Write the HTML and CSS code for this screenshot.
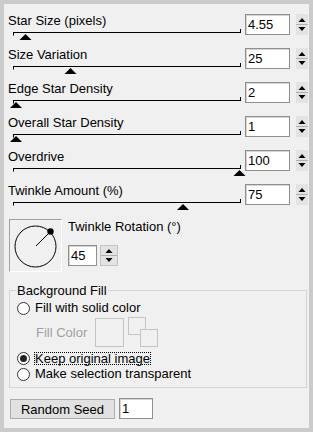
FILE: index.html
```html
<!DOCTYPE html>
<html>
<head>
<meta charset="utf-8">
<link rel="stylesheet" href="styles.css">
</head>
<body>
<div class="panel">
  <div class="row">
    <div class="slider">
      <div class="label">Star Size (pixels)</div>
      <svg class="track" width="228" height="12" viewBox="0 0 228 12"><path d="M0 4.5H227M0.5 4V7.5M227.5 1V5" stroke="#000" fill="none"/><polygon points="6.5,12 18.5,12 12.5,6" fill="#000"/></svg>
    </div>
    <input class="num" value="4.55">
    <svg class="spin" width="12" height="21" viewBox="0 0 12 21"><rect width="12" height="21" fill="#e3e3e3"/><path d="M0 10.5H12" stroke="#b0b0b0"/><polygon points="2.5,8 9.5,8 6,4" fill="#000"/><polygon points="2.5,13 9.5,13 6,17" fill="#000"/></svg>
  </div>
  <div class="row">
    <div class="slider">
      <div class="label">Size Variation</div>
      <svg class="track" width="228" height="12" viewBox="0 0 228 12"><path d="M0 4.5H227M0.5 4V7.5M227.5 1V5" stroke="#000" fill="none"/><polygon points="51.5,12 63.5,12 57.5,6" fill="#000"/></svg>
    </div>
    <input class="num" value="25">
    <svg class="spin" width="12" height="21" viewBox="0 0 12 21"><rect width="12" height="21" fill="#e3e3e3"/><path d="M0 10.5H12" stroke="#b0b0b0"/><polygon points="2.5,8 9.5,8 6,4" fill="#000"/><polygon points="2.5,13 9.5,13 6,17" fill="#000"/></svg>
  </div>
  <div class="row">
    <div class="slider">
      <div class="label">Edge Star Density</div>
      <svg class="track" width="228" height="12" viewBox="0 0 228 12"><path d="M0 4.5H227M0.5 4V7.5M227.5 1V5" stroke="#000" fill="none"/><polygon points="-3,12 9,12 3,6" fill="#000"/></svg>
    </div>
    <input class="num" value="2">
    <svg class="spin" width="12" height="21" viewBox="0 0 12 21"><rect width="12" height="21" fill="#e3e3e3"/><path d="M0 10.5H12" stroke="#b0b0b0"/><polygon points="2.5,8 9.5,8 6,4" fill="#000"/><polygon points="2.5,13 9.5,13 6,17" fill="#000"/></svg>
  </div>
  <div class="row">
    <div class="slider">
      <div class="label">Overall Star Density</div>
      <svg class="track" width="228" height="12" viewBox="0 0 228 12"><path d="M0 4.5H227M0.5 4V7.5M227.5 1V5" stroke="#000" fill="none"/><polygon points="-3,12 9,12 3,6" fill="#000"/></svg>
    </div>
    <input class="num" value="1">
    <svg class="spin" width="12" height="21" viewBox="0 0 12 21"><rect width="12" height="21" fill="#e3e3e3"/><path d="M0 10.5H12" stroke="#b0b0b0"/><polygon points="2.5,8 9.5,8 6,4" fill="#000"/><polygon points="2.5,13 9.5,13 6,17" fill="#000"/></svg>
  </div>
  <div class="row">
    <div class="slider">
      <div class="label">Overdrive</div>
      <svg class="track" width="234" height="12" viewBox="0 0 234 12"><path d="M0 4.5H227M0.5 4V7.5M227.5 1V5" stroke="#000" fill="none"/><polygon points="220.5,12 232.5,12 226.5,6" fill="#000"/></svg>
    </div>
    <input class="num" value="100">
    <svg class="spin" width="12" height="21" viewBox="0 0 12 21"><rect width="12" height="21" fill="#e3e3e3"/><path d="M0 10.5H12" stroke="#b0b0b0"/><polygon points="2.5,8 9.5,8 6,4" fill="#000"/><polygon points="2.5,13 9.5,13 6,17" fill="#000"/></svg>
  </div>
  <div class="row">
    <div class="slider">
      <div class="label">Twinkle Amount (%)</div>
      <svg class="track" width="228" height="12" viewBox="0 0 228 12"><path d="M0 4.5H227M0.5 4V7.5M227.5 1V5" stroke="#000" fill="none"/><polygon points="164,12 176,12 170,6" fill="#000"/></svg>
    </div>
    <input class="num" value="75">
    <svg class="spin" width="12" height="21" viewBox="0 0 12 21"><rect width="12" height="21" fill="#e3e3e3"/><path d="M0 10.5H12" stroke="#b0b0b0"/><polygon points="2.5,8 9.5,8 6,4" fill="#000"/><polygon points="2.5,13 9.5,13 6,17" fill="#000"/></svg>
  </div>

  <div class="rotation">
    <div class="dial">
      <svg width="51" height="51" viewBox="0 0 51 51"><circle cx="25.5" cy="26.5" r="20.5" fill="none" stroke="#000"/><path d="M26 26L40 12" stroke="#000"/><circle cx="40.5" cy="11.5" r="3.2" fill="#000"/></svg>
    </div>
    <div class="rot-side">
      <div class="label">Twinkle Rotation (°)</div>
      <div class="rot-input">
        <input class="num small" value="45">
        <svg class="spin wide" width="18" height="21" viewBox="0 0 18 21"><rect x="0.5" y="0.5" width="17" height="20" fill="#e3e3e3" stroke="#c4c4c4"/><path d="M1 10.5H17" stroke="#b0b0b0"/><polygon points="5.5,8 12.5,8 9,4" fill="#000"/><polygon points="5.5,13 12.5,13 9,17" fill="#000"/></svg>
      </div>
    </div>
  </div>

  <fieldset class="group">
    <legend>Background Fill</legend>
    <div class="radio-row"><span class="radio"></span><span class="rtext">Fill with solid color</span></div>
    <div class="fill-row">
      <span class="fill-label">Fill Color</span>
      <span class="swatch"></span>
      <span class="swap"><span class="sq sq1"></span><span class="sq sq2"></span></span>
    </div>
    <div class="radio-row"><span class="radio checked"></span><span class="rtext focus">Keep original image</span></div>
    <div class="radio-row"><span class="radio"></span><span class="rtext">Make selection transparent</span></div>
  </fieldset>

  <div class="seed-row">
    <button class="btn">Random Seed</button>
    <input class="num seed" value="1">
  </div>
</div>
</body>
</html>
```
FILE: styles.css
```css
html, body {
  margin: 0;
  padding: 0;
}
body {
  background: #cbcbcb;
  padding: 4px;
  width: 313px;
  height: 432px;
  box-sizing: border-box;
  font-family: "Liberation Sans", Arial, sans-serif;
  font-size: 13px;
  color: #000;
}
.panel {
  background: #f0f0f0;
  width: 305px;
  height: 424px;
  box-sizing: border-box;
  padding: 9px 0 0 4px;
  overflow: hidden;
}
.row {
  display: flex;
  align-items: flex-start;
  height: 34px;
}
.slider {
  width: 233px;
  flex: none;
}
.label {
  line-height: 15px;
  white-space: nowrap;
}
.track {
  display: block;
  margin-left: 5px;
  overflow: visible;
}
.num {
  box-sizing: border-box;
  width: 45px;
  height: 21px;
  margin: 1px 0 0 4px;
  padding: 0 2px;
  border: 1px solid #8f8f8f;
  box-shadow: inset 1px 1px 0 #d4d4d4;
  background: #fff;
  font-family: "Liberation Sans", Arial, sans-serif;
  font-size: 13px;
  color: #000;
  outline: none;
  flex: none;
}
.spin {
  display: block;
  flex: none;
  margin: 1px 0 0 6px;
}
.rotation {
  display: flex;
  margin: 2px 0 0 1px;
}
.dial {
  width: 53px;
  height: 53px;
  box-sizing: border-box;
  border-top: 1px solid #a0a0a0;
  border-left: 1px solid #a0a0a0;
  border-right: 1px solid #fff;
  border-bottom: 1px solid #fff;
}
.dial svg {
  display: block;
}
.rot-side {
  margin-left: 6px;
}
.rot-input {
  display: flex;
  margin-top: 11px;
}
.num.small {
  width: 29px;
  margin: 0;
}
.spin.wide {
  margin: 0 0 0 3px;
}
.group {
  margin: 11px 2px 0 1px;
  padding: 0 0 5px 6px;
  border: 1px solid #d5d5d5;
  min-width: 0;
}
.group legend {
  padding: 0 1px;
  line-height: 15px;
}
.radio-row {
  display: flex;
  align-items: center;
  height: 16px;
  line-height: 16px;
  margin-left: 1px;
}
.radio-row:first-of-type {
  margin-top: 2px;
}
.radio {
  width: 13px;
  height: 13px;
  box-sizing: border-box;
  border: 1px solid #333;
  border-radius: 50%;
  background: #fff;
  flex: none;
  position: relative;
}
.radio.checked::after {
  content: "";
  position: absolute;
  left: 2px;
  top: 2px;
  width: 7px;
  height: 7px;
  border-radius: 50%;
  background: #222;
}
.rtext {
  margin-left: 5px;
  white-space: nowrap;
}
.rtext.focus {
  margin-left: 4px;
  line-height: 11px;
  border: 1px dotted #000;
}
.fill-row {
  display: flex;
  align-items: center;
  margin: 1px 0 3px 20px;
  height: 30px;
}
.fill-label {
  color: #a0a0a0;
  width: 59px;
}
.swatch {
  width: 29px;
  height: 29px;
  box-sizing: border-box;
  border: 1px solid #c4c4c4;
}
.swap {
  position: relative;
  width: 30px;
  height: 30px;
  margin-left: 4px;
}
.sq {
  position: absolute;
  width: 18px;
  height: 18px;
  box-sizing: border-box;
  border: 1px solid #c4c4c4;
  background: #f0f0f0;
}
.sq1 {
  left: 0;
  top: 0;
}
.sq2 {
  left: 12px;
  top: 12px;
}
.seed-row {
  display: flex;
  align-items: flex-start;
  margin: 10px 0 0 2px;
}
.btn {
  width: 105px;
  height: 20px;
  margin-top: 1px;
  padding: 0;
  border: 1px solid #adadad;
  background: #e1e1e1;
  font-family: "Liberation Sans", Arial, sans-serif;
  font-size: 13px;
  color: #000;
}
.num.seed {
  width: 34px;
  margin: 0 0 0 4px;
}
```
